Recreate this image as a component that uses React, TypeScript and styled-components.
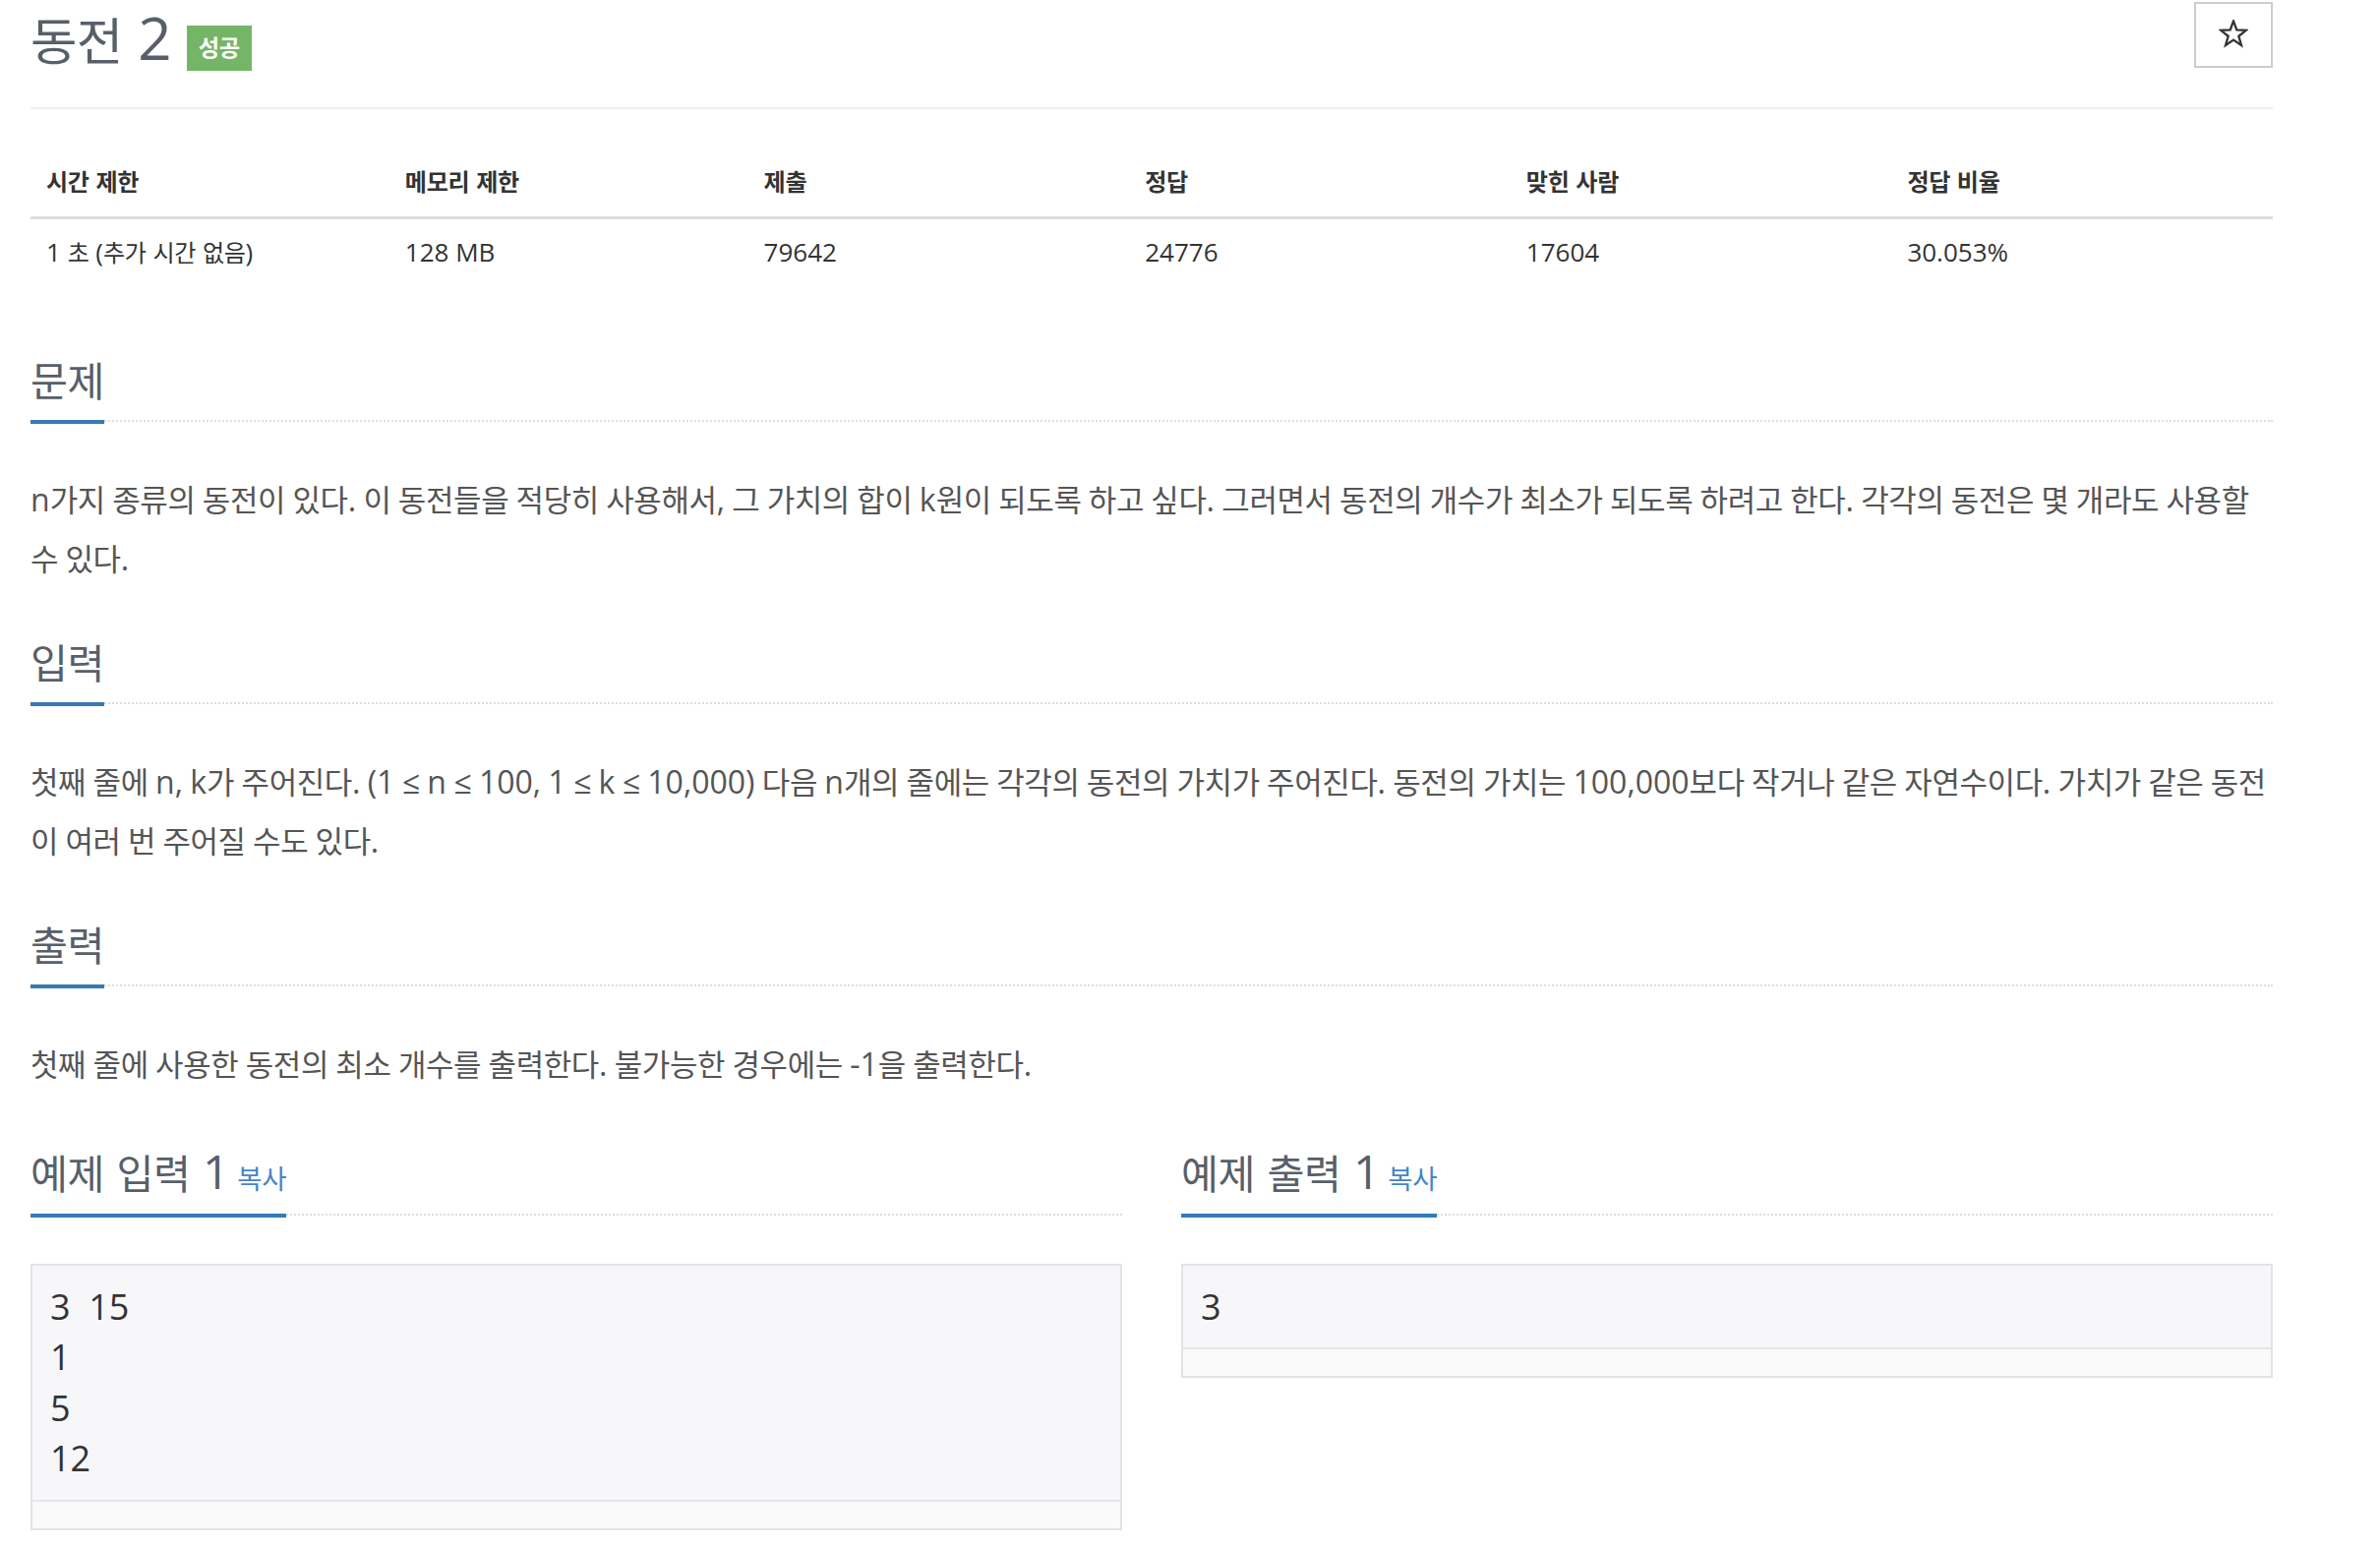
import styled, { createGlobalStyle } from "styled-components";

const GlobalStyle = createGlobalStyle`
  body {
    margin: 0;
    background: #fff;
    color: #333;
    font-family: "Open Sans", "Liberation Sans", "Noto Sans CJK KR", sans-serif;
  }
`;

// hangul in the reference font is narrower than Noto CJK, so each syllable gets its own size.
// one span per syllable keeps a line break inside a word from spanning two lines.
// --ko lets a block pick the hangul size relative to its latin size.
const HANGUL = /([\uac00-\ud7a3])/;

const Hangul = styled.span`
  font-size: var(--ko, 0.86em);
  letter-spacing: -0.012em;
  line-height: 1;
`;

const K = ({ children }: { children: string }) => (
  <>
    {children
      .split(HANGUL)
      .map((part, i) => (i % 2 === 1 ? <Hangul key={i}>{part}</Hangul> : part))}
  </>
);

const Page = styled.main`
  width: 2280px;
  padding: 0 0 40px 31px;
`;

const Header = styled.div`
  display: flex;
  justify-content: space-between;
  align-items: flex-start;
  padding-bottom: 37px;
  border-bottom: 2px solid #eee;
`;

const TitleRow = styled.h1`
  display: flex;
  align-items: flex-start;
  gap: 15px;
  margin: 0;
  font-weight: 400;
`;

const Title = styled.span`
  margin-top: 6px;
  font-size: 60px;
  line-height: 64px;
  color: #585f69;
`;

const Badge = styled.span`
  display: inline-flex;
  align-items: center;
  height: 46px;
  margin-top: 26px;
  padding: 0 12px;
  background: #74b566;
  color: #fff;
  font-size: 27px;
  font-weight: 700;
`;

const StarButton = styled.button`
  display: flex;
  align-items: center;
  justify-content: center;
  width: 80px;
  height: 67px;
  margin-top: 2px;
  padding: 0 0 2px;
  border: 2px solid #ccc;
  background: #fff;
`;

const InfoTable = styled.table`
  --ko: 0.926em;
  width: 100%;
  margin-top: 37px;
  border-collapse: collapse;
  font-size: 26px;
  line-height: 40px;
`;

const Th = styled.th<{ w: number }>`
  width: ${p => p.w}%;
  padding: 16px;
  text-align: left;
  font-weight: 700;
  border-bottom: 3px solid #ddd;
`;

const Td = styled.td`
  padding: 13px 16px 19px;
`;

const Section = styled.section<{ gap: number }>`
  margin-top: ${p => p.gap}px;
`;

const Headline = styled.div`
  display: flex;
  align-items: flex-start;
  border-bottom: 2px dotted #ddd;
  margin-bottom: 49px;
`;

const H2 = styled.h2`
  margin: 0 0 -4px;
  padding-bottom: 16px;
  border-bottom: 4px solid #337ab7;
  font-size: 48px;
  line-height: 52px;
  font-weight: 400;
  color: #585f69;
  white-space: nowrap;
`;

const CopyButton = styled.button`
  margin-left: 8px;
  padding: 0;
  border: 0;
  background: none;
  color: #4585c8;
  font-family: inherit;
  font-size: 32px;
  vertical-align: baseline;
`;

const Text = styled.p`
  --ko: 0.9675em;
  margin: 0;
  font-size: 32px;
  line-height: 60px;
  word-spacing: -1px;
  color: #555;
`;

const SampleGrid = styled.div`
  display: grid;
  grid-template-columns: 1fr 1fr;
  column-gap: 60px;
  margin-top: 53px;
`;

const SampleBox = styled.div`
  border: 2px solid #e2e2e8;
  background: #f7f7f9;
`;

const Pre = styled.pre`
  margin: 0;
  padding: 16px 18px;
  font-family: "Open Sans", sans-serif;
  font-size: 36px;
  line-height: 1.42857;
  color: #333;
`;

const ScrollTrack = styled.div`
  height: 27px;
  border-top: 2px solid #e6e6e8;
  background: #fafafa;
`;

const StarIcon = () => (
  <svg width="30" height="29" viewBox="-1.5 -1.5 31 30">
    <polygon
      points="14,0 17.41,9.31 27.31,9.67 19.52,15.79 22.23,25.33 14,19.8 5.77,25.33 8.48,15.79 0.69,9.67 10.59,9.31"
      fill="none"
      stroke="#333"
      strokeWidth="2.4"
      strokeLinejoin="miter"
    />
  </svg>
);

const columns = [
  { head: "시간 제한", value: "1 초 (추가 시간 없음)", w: 16 },
  { head: "메모리 제한", value: "128 MB", w: 16 },
  { head: "제출", value: "79642", w: 17 },
  { head: "정답", value: "24776", w: 17 },
  { head: "맞힌 사람", value: "17604", w: 17 },
  { head: "정답 비율", value: "30.053%", w: 17 },
];

const sections = [
  {
    title: "문제",
    text: "n가지 종류의 동전이 있다. 이 동전들을 적당히 사용해서, 그 가치의 합이 k원이 되도록 하고 싶다. 그러면서 동전의 개수가 최소가 되도록 하려고 한다. 각각의 동전은 몇 개라도 사용할 수 있다.",
  },
  {
    title: "입력",
    text: "첫째 줄에 n, k가 주어진다. (1 ≤ n ≤ 100, 1 ≤ k ≤ 10,000) 다음 n개의 줄에는 각각의 동전의 가치가 주어진다. 동전의 가치는 100,000보다 작거나 같은 자연수이다. 가치가 같은 동전이 여러 번 주어질 수도 있다.",
  },
  {
    title: "출력",
    text: "첫째 줄에 사용한 동전의 최소 개수를 출력한다. 불가능한 경우에는 -1을 출력한다.",
  },
];

const samples = [
  { title: "예제 입력 1", data: "3  15\n1\n5\n12" },
  { title: "예제 출력 1", data: "3" },
];

export default function App() {
  return (
    <Page>
      <GlobalStyle />
      <Header>
        <TitleRow>
          <Title>
            <K>동전 2</K>
          </Title>
          <Badge>
            <K>성공</K>
          </Badge>
        </TitleRow>
        <StarButton aria-label="즐겨찾기">
          <StarIcon />
        </StarButton>
      </Header>

      <InfoTable>
        <thead>
          <tr>
            {columns.map(c => (
              <Th key={c.head} w={c.w}>
                <K>{c.head}</K>
              </Th>
            ))}
          </tr>
        </thead>
        <tbody>
          <tr>
            {columns.map(c => (
              <Td key={c.head}>
                <K>{c.value}</K>
              </Td>
            ))}
          </tr>
        </tbody>
      </InfoTable>

      {sections.map((s, i) => (
        <Section key={s.title} gap={i === 0 ? 64 : 48}>
          <Headline>
            <H2>
              <K>{s.title}</K>
            </H2>
          </Headline>
          <Text>
            <K>{s.text}</K>
          </Text>
        </Section>
      ))}

      <SampleGrid>
        {samples.map(s => (
          <section key={s.title}>
            <Headline>
              <H2>
                <K>{s.title}</K>
                <CopyButton>
                  <K>복사</K>
                </CopyButton>
              </H2>
            </Headline>
            <SampleBox>
              <Pre>{s.data}</Pre>
              <ScrollTrack />
            </SampleBox>
          </section>
        ))}
      </SampleGrid>
    </Page>
  );
}
